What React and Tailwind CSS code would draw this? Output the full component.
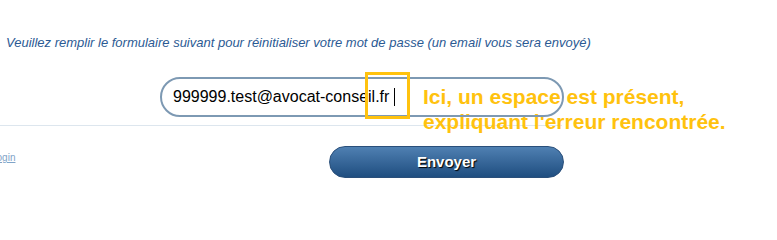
const App = () => {
    return (
        <div className="w-[777px] h-[216px] bg-white overflow-hidden font-['Liberation_Sans',Arial,sans-serif]">
            {/* Intro text */}
            <p className="pt-[35px] pl-[6px] text-[13px] leading-[16px] italic text-[#2b5a93]">
                Veuillez remplir le formulaire suivant pour réinitialiser votre mot de passe (un email vous sera envoyé)
            </p>

            {/* Email field */}
            <div className="relative mt-[26px] ml-[160px] w-[404px] h-[40px]">
                {/* Annotation text sits under the field border */}
                <p className="absolute left-[263px] top-[7px] whitespace-nowrap text-[21px] leading-[25px] font-bold text-[#ffc20e]">
                    Ici, un espace est présent,
                    <br />
                    expliquant l'erreur rencontrée.
                </p>
                <div className="relative flex items-center h-full rounded-full border-2 border-[#7d99b3] pl-[11px] text-[16px] text-black">
                    <span>999999.test@avocat-conseil.fr</span>
                    <span className="ml-[5px] w-px h-[18px] bg-black"></span>
                </div>
                <div className="absolute left-[205px] top-[-5px] w-[45px] h-[47px] border-[3px] border-[#ffc20e]"></div>
            </div>

            <div className="mt-[8px] w-[562px] h-px bg-[#dde6ee]"></div>

            {/* Actions */}
            <div className="flex items-start mt-[20px]">
                <a href="#" className="-ml-[9px] mt-[4px] w-[338px] text-[10px] text-[#7fa4c8] underline">
                    Login
                </a>
                <button className="w-[235px] h-[32px] rounded-full border border-[#2a4f7a] bg-gradient-to-b from-[#4f80b2] to-[#1f4e80] text-white text-[15px] font-bold [text-shadow:1px_1px_1px_#000]">
                    Envoyer
                </button>
            </div>
        </div>
    );
};

export default App;
